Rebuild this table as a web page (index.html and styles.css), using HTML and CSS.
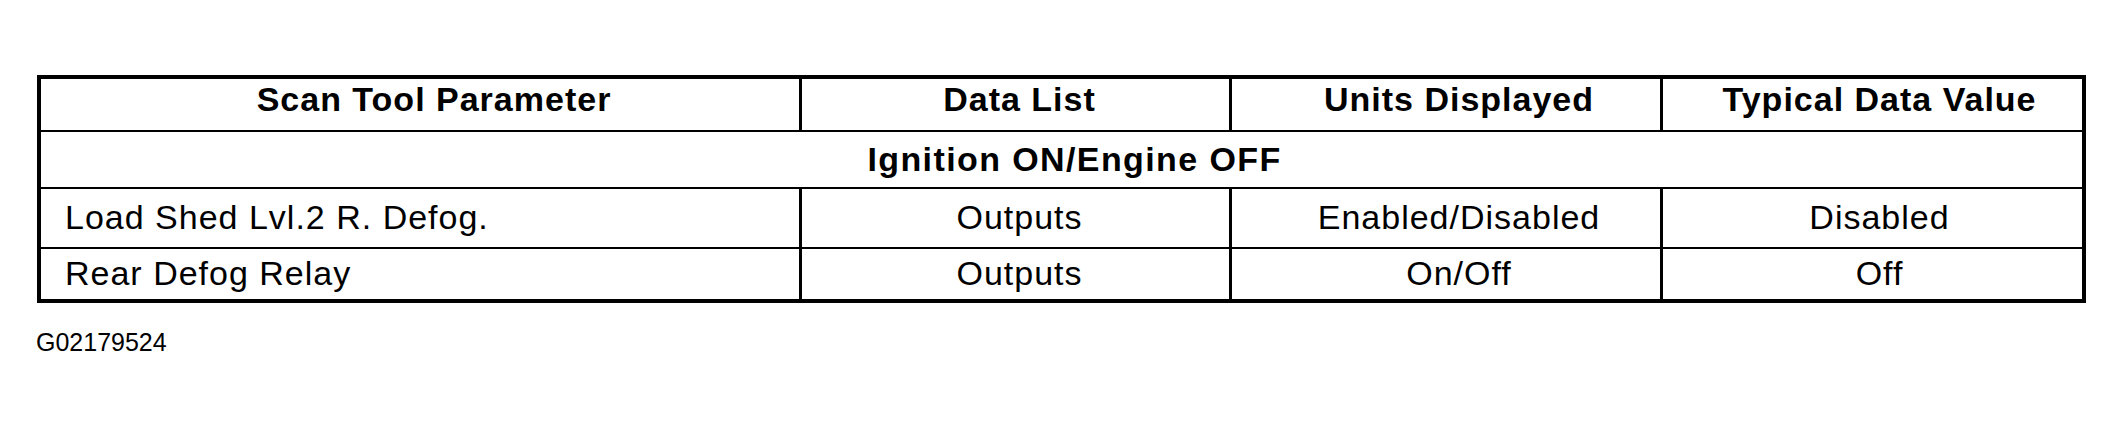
FILE: index.html
```html
<!DOCTYPE html>
<html>
<head>
<meta charset="utf-8">
<link rel="stylesheet" href="styles.css">
</head>
<body>
<div class="frame">
  <div class="grid">
    <div class="cell head c1">Scan Tool Parameter</div>
    <div class="cell head c2">Data List</div>
    <div class="cell head c3">Units Displayed</div>
    <div class="cell head c4">Typical Data Value</div>
    <div class="cell section">Ignition ON/Engine OFF</div>
    <div class="cell row c1 left">Load Shed Lvl.2 R. Defog.</div>
    <div class="cell row c2">Outputs</div>
    <div class="cell row c3">Enabled/Disabled</div>
    <div class="cell row c4">Disabled</div>
    <div class="cell row c1 left">Rear Defog Relay</div>
    <div class="cell row c2">Outputs</div>
    <div class="cell row c3">On/Off</div>
    <div class="cell row c4">Off</div>
  </div>
</div>
<div class="caption">G02179524</div>
</body>
</html>
```

FILE: styles.css
```css
html, body {
  margin: 0;
  padding: 0;
  background: #fff;
}
body {
  font-family: "Liberation Sans", Arial, sans-serif;
  color: #000;
  width: 2124px;
  height: 423px;
  overflow: hidden;
}
.frame {
  margin: 75px 0 0 37px;
  width: 2049px;
  box-sizing: border-box;
  border: 4px solid #000;
}
.grid {
  display: grid;
  grid-template-columns: 758px 430px 431px 422px;
  grid-template-rows: 51px 57px 60px 52px;
}
.cell {
  box-sizing: border-box;
  display: flex;
  align-items: center;
  justify-content: center;
  font-size: 34px;
  letter-spacing: 1px;
  border-left: 3px solid #000;
  border-top: 2px solid #000;
  white-space: nowrap;
}
.head {
  font-weight: bold;
  border-top: none;
  padding-bottom: 10px;
}
.row {
  padding-bottom: 2px;
}
.c1 {
  border-left: none;
  padding-left: 28px;
}
.c2 {
  padding-left: 8px;
}
.c3 {
  padding-left: 26px;
}
.c4 {
  padding-left: 14px;
}
.section {
  grid-column: 1 / span 4;
  border-left: none;
  font-weight: bold;
  letter-spacing: 1.4px;
  padding-left: 26px;
}
.left {
  justify-content: flex-start;
  padding-left: 24px;
}
.caption {
  margin: 25px 0 0 36px;
  font-size: 25px;
}
```
